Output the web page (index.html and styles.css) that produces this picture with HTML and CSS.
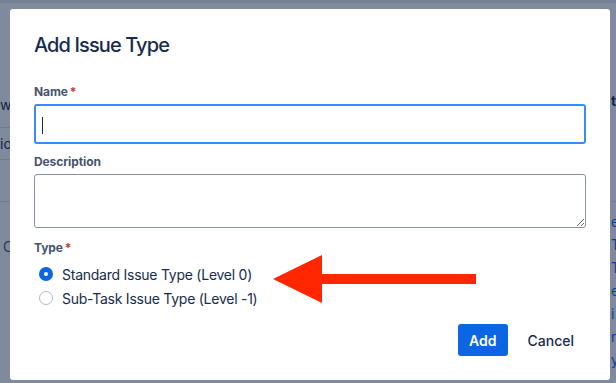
FILE: index.html
```html
<!DOCTYPE html>
<html lang="en">
<head>
    <meta charset="UTF-8">
    <meta name="viewport" content="width=device-width, initial-scale=1.0">
    <title>Add Issue Type</title>
    <link rel="stylesheet" href="styles.css">
</head>
<body>

    <!-- Page behind the dialog (only the edges show) -->
    <div class="page">
        <div class="topbar"></div>
        <div class="columns">
            <div class="col-left">
                <div class="row-head"></div>
                <div class="row row-first">wo</div>
                <div class="row row-second">io</div>
                <div class="row row-empty"></div>
                <div class="row-text">Co</div>
            </div>
            <div class="col-right">
                <div class="row-head-right"></div>
                <div class="row-title">t</div>
                <div class="row-rule"></div>
                <div class="link">e</div>
                <div class="link">T</div>
                <div class="link">T</div>
                <div class="link">e</div>
                <div class="link">i</div>
                <div class="link">n</div>
                <div class="link">y</div>
            </div>
        </div>
    </div>

    <div class="blanket"></div>

    <!-- Dialog -->
    <div class="modal">
        <h1 class="modal-title">Add Issue Type</h1>

        <div class="modal-body">
            <div class="field">
                <label class="field-label">Name<span class="req">*</span></label>
                <div class="textfield is-focused"><span class="caret"></span></div>
            </div>

            <div class="field">
                <label class="field-label">Description</label>
                <textarea class="textarea"></textarea>
            </div>

            <div class="field field-type">
                <label class="field-label">Type<span class="req">*</span></label>
                <div class="radio-group">
                    <div class="radio-row">
                        <span class="radio is-checked"></span>
                        <span>Standard Issue Type (Level 0)</span>
                    </div>
                    <div class="radio-row">
                        <span class="radio"></span>
                        <span>Sub-Task Issue Type (Level -1)</span>
                    </div>
                </div>
            </div>
        </div>

        <div class="modal-footer">
            <button class="btn btn-primary">Add</button>
            <button class="btn btn-subtle">Cancel</button>
        </div>
    </div>

    <!-- Annotation arrow -->
    <svg class="arrow" width="210" height="50" viewBox="0 0 210 50">
        <polygon points="0,24 49,0 49,48" fill="#ff2600"/>
        <rect x="48" y="19" width="155" height="10" fill="#ff2600"/>
    </svg>

</body>
</html>
```

FILE: styles.css
```css
/* General Reset */
* {
    margin: 0;
    padding: 0;
    box-sizing: border-box;
}

body {
    font-family: Inter, "Noto Sans", sans-serif;
    background-color: #ffffff;
    color: #172b4d;
    width: 616px;
    height: 383px;
    overflow: hidden;
    position: relative;
}

/* Page behind */
.page {
    height: 100%;
}

.topbar {
    height: 3px;
    background-color: #e9ebee;
}

.columns {
    display: flex;
    justify-content: space-between;
    font-size: 14px;
}

.col-left {
    width: 40px;
    white-space: nowrap;
}

.col-right {
    width: 6px;
    white-space: nowrap;
    padding-left: 1px;
}

.row-head {
    height: 93px;
}

.row {
    border-bottom: 1px solid #dfe1e6;
}

.row-first {
    height: 32px;
    line-height: 18px;
}

.row-second {
    height: 32px;
    line-height: 31px;
}

.row-empty {
    height: 42px;
}

.row-text {
    margin-top: 36px;
    padding-left: 3px;
    color: #44546f;
}

.row-head-right {
    height: 90px;
}

.row-title {
    font-weight: 700;
    line-height: 16px;
}

.row-rule {
    height: 93px;
    border-bottom: 1px solid #dfe1e6;
    margin-bottom: 8px;
}

.link {
    color: #0c66e4;
    line-height: 23px;
}

.blanket {
    position: absolute;
    inset: 0;
    background-color: rgba(9, 30, 66, 0.52);
}

/* Modal */
.modal {
    position: absolute;
    left: 10px;
    top: 9px;
    width: 600px;
    height: 371px;
    background-color: #ffffff;
    border-radius: 3px;
    padding: 24px 24px 24px;
    display: flex;
    flex-direction: column;
}

.modal-title {
    font-size: 20px;
    font-weight: 500;
    line-height: 24px;
    color: #172b4d;
    letter-spacing: -0.9px;
}

.modal-body {
    flex: 1;
    padding-top: 27px;
}

.field + .field {
    margin-top: 10px;
}

.field-type {
    padding-top: 2px;
}

.field-label {
    display: block;
    font-size: 12px;
    font-weight: 700;
    line-height: 16px;
    color: #44546f;
    margin-bottom: 4px;
    letter-spacing: -0.1px;
}

.req {
    color: #c9372c;
    padding-left: 2px;
}

.textfield {
    height: 40px;
    border: 1px solid #8590a2;
    border-radius: 3px;
    padding: 11px 6px;
}

.textfield.is-focused {
    border: 2px solid #388bff;
}

.caret {
    display: block;
    width: 1px;
    height: 17px;
    background-color: #172b4d;
}

.textarea {
    display: block;
    width: 100%;
    height: 54px;
    border: 1px solid #8590a2;
    border-radius: 3px;
    font-family: inherit;
    resize: vertical;
}

.radio-group {
    padding-top: 2px;
}

.radio-row {
    display: flex;
    align-items: center;
    gap: 9px;
    height: 24px;
    padding-left: 5px;
    font-size: 14px;
    color: #172b4d;
    letter-spacing: -0.25px;
}

.radio {
    width: 14px;
    height: 14px;
    border-radius: 50%;
    border: 1px solid #b3b9c4;
    background-color: #ffffff;
    position: relative;
}

.radio.is-checked {
    border: none;
    background-color: #0c66e4;
}

.radio.is-checked::after {
    content: "";
    position: absolute;
    left: 5px;
    top: 5px;
    width: 4px;
    height: 4px;
    border-radius: 50%;
    background-color: #ffffff;
}

.modal-footer {
    display: flex;
    justify-content: flex-end;
    gap: 8px;
}

.btn {
    height: 32px;
    padding: 0 12px;
    border: none;
    border-radius: 3px;
    font-family: inherit;
    font-size: 14px;
    font-weight: 500;
    cursor: pointer;
}

.btn-primary {
    background-color: #0c66e4;
    color: #ffffff;
    font-weight: 600;
    padding: 0 11px;
}

.btn-subtle {
    background-color: transparent;
    color: #172b4d;
}

/* Arrow */
.arrow {
    position: absolute;
    left: 273px;
    top: 255px;
}
```
